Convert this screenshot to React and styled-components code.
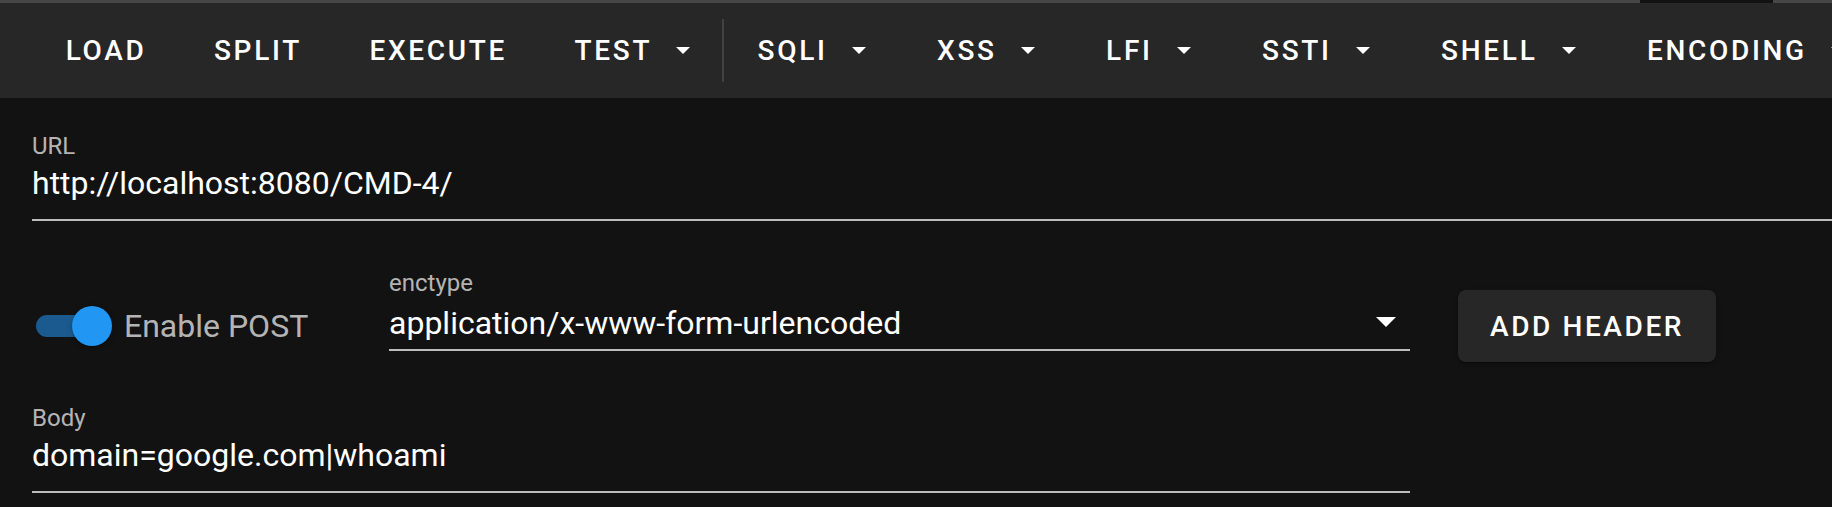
import React from "react"
import styled, { createGlobalStyle } from "styled-components"

const GlobalStyle = createGlobalStyle`
  html, body {
    margin: 0;
    padding: 0;
    background: #121212;
  }
  body {
    font-family: Roboto, "Noto Sans", "Liberation Sans", sans-serif;
    color: #fff;
    overflow: hidden;
  }
`

const Page = styled.div`
  width: 1832px;
  height: 507px;
  overflow: hidden;
  background: #121212;
`

const TopLine = styled.div`
  height: 3px;
  background: linear-gradient(
    to right,
    #464646 1640px,
    #121212 1640px,
    #121212 1773px,
    #464646 1773px
  );
`

const Toolbar = styled.nav`
  display: flex;
  align-items: center;
  height: 95px;
  padding-left: 32px;
  background: #272727;
  overflow: hidden;
  white-space: nowrap;
`

const NavButton = styled.button`
  flex-shrink: 0;
  display: inline-flex;
  align-items: center;
  height: 60px;
  margin: 0 17.7px;
  padding: 0 16px;
  border: 0;
  background: transparent;
  color: #fff;
  font-family: Roboto, sans-serif;
  font-weight: 500;
  font-size: 28px;
  letter-spacing: 2.7px;
  text-transform: uppercase;
  cursor: pointer;
`

const Caret = styled.svg`
  flex-shrink: 0;
  width: 14px;
  height: 7px;
  margin-left: 24px;
  margin-right: 4px;
  fill: #fff;
`

const Divider = styled.span`
  flex-shrink: 0;
  width: 2px;
  height: 63px;
  margin: 0 0 0 -6px;
  background: rgba(255, 255, 255, 0.12);
`

const Form = styled.main`
  padding-left: 32px;
`

const Field = styled.div`
  width: ${(p) => p.$width};
  margin-top: ${(p) => p.$top}px;
  align-self: ${(p) => (p.$top === 0 ? "flex-start" : "auto")};
`

const Label = styled.label`
  display: block;
  font-size: 24px;
  line-height: 28px;
  color: rgba(255, 255, 255, 0.7);
`

const Value = styled.div`
  position: relative;
  margin-top: ${(p) => p.$gap}px;
  padding-bottom: ${(p) => p.$pad}px;
  font-size: 32px;
  line-height: 40px;
  color: #fff;
  border-bottom: 2px solid #bdbdbd;
  white-space: nowrap;
`

const SelectIcon = styled.svg`
  position: absolute;
  right: 0;
  top: -6px;
  width: 48px;
  height: 48px;
  fill: #fff;
`

const Row = styled.div`
  display: flex;
  align-items: center;
  height: 114px;
  margin-top: 48px;
`

const SwitchGroup = styled.div`
  display: flex;
  align-items: center;
  width: 357px;
  flex-shrink: 0;
`

const SwitchBox = styled.span`
  position: relative;
  flex-shrink: 0;
  width: 80px;
  height: 40px;
`

const Track = styled.span`
  position: absolute;
  left: 4px;
  top: 9px;
  width: 68px;
  height: 22px;
  border-radius: 11px;
  background: #1b5a8e;
`

const Thumb = styled.span`
  position: absolute;
  left: 40px;
  top: 0;
  width: 40px;
  height: 40px;
  border-radius: 50%;
  background: #2196f3;
  box-shadow: 0 2px 2px -1px rgba(0, 0, 0, 0.2), 0 1px 2px rgba(0, 0, 0, 0.14),
    0 1px 6px rgba(0, 0, 0, 0.12);
`

const SwitchText = styled.span`
  margin-left: 12px;
  font-size: 32px;
  line-height: 40px;
  color: rgba(255, 255, 255, 0.7);
`

const ActionButton = styled.button`
  flex-shrink: 0;
  height: 72px;
  margin-left: 48px;
  padding: 0 32px;
  border: 0;
  border-radius: 8px;
  background: #272727;
  color: #fff;
  font-family: Roboto, sans-serif;
  font-weight: 500;
  font-size: 28px;
  letter-spacing: 2.6px;
  text-transform: uppercase;
  box-shadow: 0 3px 1px -2px rgba(0, 0, 0, 0.2), 0 2px 2px rgba(0, 0, 0, 0.14),
    0 1px 5px rgba(0, 0, 0, 0.12);
  cursor: pointer;
`

const menu = [
  { label: "Load" },
  { label: "Split" },
  { label: "Execute" },
  { label: "Test", drop: true, divider: true },
  { label: "SQLI", drop: true },
  { label: "XSS", drop: true },
  { label: "LFI", drop: true },
  { label: "SSTI", drop: true },
  { label: "Shell", drop: true },
  { label: "Encoding", drop: true },
]

const DropCaret = () => (
  <Caret viewBox="0 0 14 7">
    <path d="M0 0h14L7 7z" />
  </Caret>
)

const App = () => {
  return (
    <Page>
      <GlobalStyle />
      <TopLine />
      <Toolbar>
        {menu.map((item) => (
          <React.Fragment key={item.label}>
            <NavButton>
              {item.label}
              {item.drop && <DropCaret />}
            </NavButton>
            {item.divider && <Divider />}
          </React.Fragment>
        ))}
      </Toolbar>
      <Form>
        <Field $width="100%" $top={34}>
          <Label>URL</Label>
          <Value $gap={3} $pad={16}>http://localhost:8080/CMD-4/</Value>
        </Field>
        <Row>
          <SwitchGroup>
            <SwitchBox>
              <Track />
              <Thumb />
            </SwitchBox>
            <SwitchText>Enable POST</SwitchText>
          </SwitchGroup>
          <Field $width="1021px" $top={0}>
            <Label>enctype</Label>
            <Value $gap={6} $pad={6}>
              application/x-www-form-urlencoded
              <SelectIcon viewBox="0 0 48 48">
                <path d="M14 20l10 10 10-10z" />
              </SelectIcon>
            </Value>
          </Field>
          <ActionButton>Add Header</ActionButton>
        </Row>
        <Field $width="1378px" $top={21}>
          <Label>Body</Label>
          <Value $gap={3} $pad={16}>domain=google.com|whoami</Value>
        </Field>
      </Form>
    </Page>
  )
}

export default App
